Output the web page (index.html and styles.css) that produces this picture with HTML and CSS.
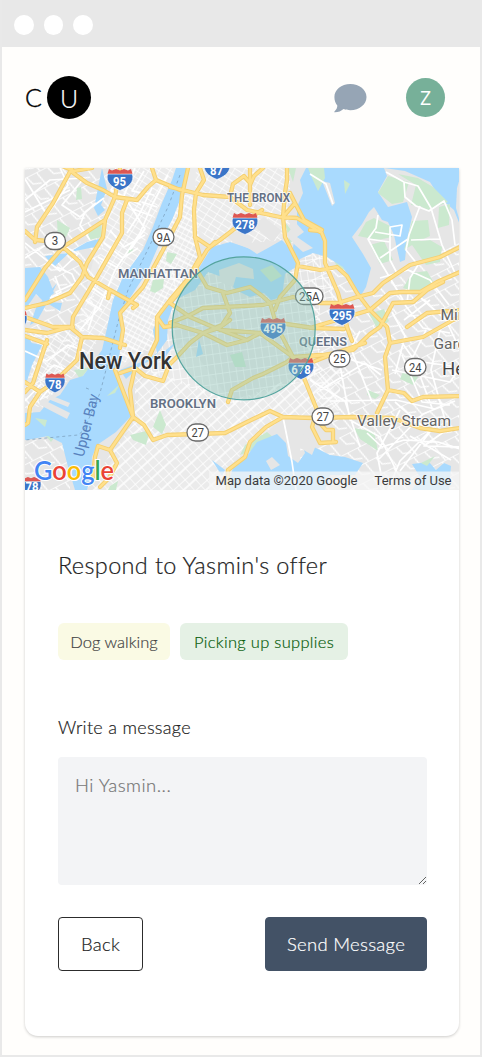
FILE: index.html
```html
<!DOCTYPE html>
<html lang="en">
<head>
<meta charset="utf-8">
<title>Respond to offer</title>
<link rel="stylesheet" href="styles.css">
</head>
<body>
<div class="window">
  <div class="titlebar"><i class="dot"></i><i class="dot"></i><i class="dot"></i></div>
  <header class="header">
    <div class="logo"><span class="logo-c">C</span><span class="logo-u">U</span></div>
    <div class="header-right">
      <svg class="chat" viewBox="0 0 33 30"><path d="M16.3 1C25.4 1 32.5 6.7 32.5 14S25.4 27.2 16.3 27.2C14 27.2 11.500 26.800 9.500 26C7.300 28.100 4 29.400 .7 29.300C.1 29.300 .1 28.700 .5 28.400C2.200 26.800 3.500 24.600 3.300 22.500C1.500 20.200 .4 17.400 .4 14C.4 6.700 7.300 1 16.300 1Z"/></svg>
      <span class="avatar">Z</span>
    </div>
  </header>
  <main class="card">
    <svg class="map" viewBox="25 168 434 322" preserveAspectRatio="none">
      <defs>
        <pattern id="fine" width="5" height="10" patternUnits="userSpaceOnUse" patternTransform="rotate(28)"><path class="st" d="M0 0H5M0 0V10M0 5H5"/></pattern>
        <pattern id="grid" width="9" height="6" patternUnits="userSpaceOnUse" patternTransform="rotate(32)"><path class="st" d="M0 0H9M0 0V6"/></pattern>
        <pattern id="tilt" width="8" height="15" patternUnits="userSpaceOnUse" patternTransform="rotate(-42)"><path class="st" d="M0 0H8M0 0V15M0 7H8"/></pattern>
        <pattern id="bk" width="7" height="10" patternUnits="userSpaceOnUse" patternTransform="rotate(-8)"><path class="st" d="M0 0H7M0 0V10"/></pattern>
        <pattern id="wide" width="23" height="17" patternUnits="userSpaceOnUse" patternTransform="rotate(-27)"><path class="st" d="M0 0H23M0 0L4 17M12 0L15 9L23 12"/></pattern>
        <path id="roads" d="M72 168L53 203L37 227L35 242M25 231L35 240L48 241M72 172L87 183L103 190L115 197L137 200L148 187L156 180M152 168L156 180L180 190M60 165L74 171L92 168M120 168L115 197L105 220L85 233L63 247L45 268L25 300M105 220L103 237L87 263L82 277L70 293L47 303L25 308M63 247L80 262L88 277L110 290L108 298M110 290L137 305L133 308M127 200L122 213L122 233L97 277L73 317L72 327M25 317L53 327L73 327M188 168L182 195L180 217L163 250L143 287L120 313L123 330L120 348M25 330L47 333L70 327L82 337L103 338L125 345M47 340L33 383L25 392M25 336L47 344M82 337L77 360L53 383L40 392L25 382M40 392L30 407L28 423L25 425M115 370L133 417L110 450L98 446L95 457L93 477M110 450L117 463L109 478L100 487M133 417L144 425L153 440L167 435L225 433L247 422L270 411L283 417L313 418L353 417L393 418L420 428L440 431L460 428M283 417L266 427L250 442L245 457L228 470L228 490M120 373L135 368L145 376L163 381L169 365L177 357L190 343L203 333L219 328L230 320M135 368L130 390L133 417M150 355L157 340L157 317L170 300L187 280L200 257L195 237L194 210L196 193L204 180L200 168M157 317L164 327L178 325M195 237L210 247L220 240L242 223L262 210M170 187L203 195L230 197L247 210L280 217L297 218L320 232M250 168L250 205M230 197L233 184L244 176L250 183M263 168L254 176L250 185M287 168L287 180L285 193L283 217L285 237L298 263L295 280L280 297L275 310M283 217L295 203L290 193M295 203L304 220L322 230M298 266L320 270L337 267L347 276L357 293L370 310L387 327L390 343L385 357L388 390L377 413M310 230L321 231L325 241L325 263L338 293L348 330M320 303L338 303L357 297L373 293L383 283L410 265L440 257L460 247M310 328L370 310L390 293L402 292L420 292L437 282L460 272M380 327L393 303L413 302L427 290L443 282M407 327L427 313L460 310M388 390L404 393L412 401L423 397L460 396M390 343L423 337L453 320L460 317M310 357L353 350L370 334L380 327M310 363L338 352L365 343M344 319L352 341M197 270L207 287L227 293L250 287L261 295L270 303L277 327L293 357L320 355M170 303L190 317L213 327L247 340L260 333L280 323L313 328L344 329M170 323L190 315L203 308L263 305L293 297L318 303M170 303L187 283L207 250L215 242M170 323L203 333L227 345L247 340M220 330L260 333L293 357M223 293L230 313L222 325L203 333M228 402L232 390L253 378L263 374L287 362L293 357L302 373L317 410L312 427L320 443L336 442M317 420L326 430L333 430L333 441"/>
        <g id="inter"><path d="M-12.500 -5H12.500C14.500 3 9 8 0 11.500C-9 8 -14.500 3 -12.500 -5Z" fill="#3a75c8" stroke="#fff" stroke-width=".7"/><path d="M-11 -10L-8 -8.500L-4 -10L0 -8.500L4 -10L8 -8.500L11 -10L12.500 -5.300H-12.500Z" fill="#dd5752"/></g>
      </defs>
      <g>
        <path class="land" d="M25 168H460V490H25Z"/>
        <path class="dense" d="M116 168H178L100 340L75 335ZM180 168H285L290 237L195 245L150 345L120 370L122 310ZM150 365L185 340L230 400L330 375L340 410L280 420L225 470V490H95L135 420L140 385Z"/>
        <path fill="url(#wide)" d="M25 168H116L90 320L25 440ZM300 250L340 255L362 300L460 240V490H300V440L340 440L310 380Z"/>
        <path fill="url(#wide)" d="M25 440H70V490H25Z"/>
        <path fill="url(#grid)" d="M116 168H175L105 340H72L97 277ZM196 168H290V240L215 245L194 225ZM25 330H105L75 375L35 410Z"/>
        <path fill="url(#fine)" d="M182 195H196L200 257L150 350L120 365V310L145 285Z"/>
        <path fill="url(#bk)" d="M170 270H320V375L235 405L145 370L170 330ZM290 240H330L335 300H290Z"/>
        <path fill="url(#tilt)" d="M135 365L235 400L340 360V410L280 420L225 470V490H85L135 420Z"/>
        <path class="park" d="M57 220L70 228L66 237L58 241ZM88 230L101 220L102 237L89 240ZM77 188L81 187L82 199L76 200ZM130 245L134 252L128 254ZM167 252L177 254L171 264L166 261ZM160 410L166 425L162 434L153 427ZM130 435L150 430L146 445L133 440ZM153 280L164 279L163 288L155 293L150 291ZM74 370L90 367L80 379ZM245 445L267 432L273 437L256 449L240 455ZM288 168L296 168L293 182ZM285 222L295 235L290 245ZM230 355L242 352L246 367L235 367ZM333 258L343 258L345 270L337 267ZM403 372L418 377L413 385L400 379ZM368 390L380 395L375 399L367 395ZM354 428L374 432L378 451L360 439ZM110 486L118 481L116 490H108ZM45 435L55 437L51 442ZM369 314L384 309L389 321L378 330Z"/>
        <g class="water">
          <path d="M176 168H188L182 195L172 220L160 242L148 270L132 295L123 307L121 330L120 350L117 370L127 397L132 415L116 432L97 445L92 457L91 475L87 490H75L67 463L62 443L48 436L27 440H25V413L40 412L50 400L60 395L70 380L83 376L102 350L107 328L113 300L123 277L143 250L153 227L162 203L172 180Z"/>
          <path d="M120 370L147 360L157 353L153 330L158 317L175 292L192 280L199 268L212 247L230 242L248 248L257 254L268 248L282 240L292 251L297 230L297 207L303 193L300 180L306 168H384L387 176L378 192L388 207L407 202L412 217L407 240L405 260L400 262L394 235L388 222L382 220L374 207L369 212L362 224L352 237L363 254L371 268L366 287L360 297L343 267L327 257L313 253L300 259L296 267L285 274L282 297L271 300L264 293L250 297L236 290L225 278L208 272L195 290L175 300L168 320L167 340L153 359L140 366L126 379Z"/>
          <path d="M384 168H460V225L454 210L440 198L430 182L405 171Z"/>
          <path d="M226 490L233 468L247 456L257 442L277 434L286 443L288 456L298 463L305 453L300 438L312 446L330 455L345 457L363 463L355 475L330 475L325 490Z"/>
          <path d="M412 464L429 462L436 470L444 463L451 466L449 490H412L420 477Z"/>
          <path d="M25 268L40 267L48 277L54 293L44 302L36 294L25 310ZM102 168L107 189L101 205L105 210L98 216L94 208L98 188ZM45 256L68 253L87 242L103 238L95 247L70 252L54 267ZM57 283L48 302L62 303L60 311L47 303L37 321L30 325L36 308ZM25 333L32 343L42 345L32 365L27 381H25ZM199 339L203 354L196 357ZM212 460L225 470L222 476ZM166 350L176 342L163 360L159 358Z"/>
        </g>
        <path class="land" d="M38 397L70 413L67 419L40 405ZM50 395L70 403L68 407L48 399ZM219 270L239 263L253 269L254 279L236 277L233 287L220 282ZM225 234L241 231L253 238L250 249L233 242ZM253 225L264 217L282 231L272 242L263 234ZM286 235L296 223L304 232L297 237L313 248L303 252L295 245ZM322 181L330 183L335 203L332 206ZM272 457L280 465L271 470L266 461ZM293 440L303 434L316 445L312 455L302 449Z"/>
        <path class="park" d="M308 168H324L325 178L318 191L312 178ZM344 180L350 184L345 194ZM260 270L272 265L282 276L271 282ZM374 218L390 226L392 237L378 240L358 236L366 222ZM388 176L409 182L403 202L392 204L378 193ZM398 174L418 178L433 187L448 202L428 210L420 206L411 205L416 185ZM412 221L428 220L430 236L417 242L404 250ZM439 207L450 204L449 225L438 228ZM412 273L427 271L434 283L416 292L403 288ZM370 245L384 241L393 260L380 264ZM410 242L430 240L442 247L440 262L426 265ZM35 418L47 420L45 427ZM108 395L120 384L115 393L107 396ZM421 463L435 456L427 466Z"/>
        <path class="land" d="M460 178V222L456 208L457 188Z"/>
        <path class="street" d="M386 172L404 182L418 186L431 208L442 245L456 275M404 182L405 197L416 206L429 211L444 201L452 220L455 245M420 206L409 235L406 250L418 265L410 278L407 303M411 240L440 239M378 215L376 228L368 239L378 258L393 283L403 300M368 239L390 242M375 232L400 236L402 225L390 227L390 260L398 275M380 258L408 239M310 174L326 184L333 204M380 278L408 270L430 280L449 305M25 179L47 215L68 185L60 168M25 200L50 180L84 178L62 205L80 217L96 203M25 212L70 190M25 258L54 240L78 254L60 271L25 243M55 276L61 292L50 298M57 267L72 274L76 283L56 292L63 302M104 198L85 212L80 225L90 240M122 175L111 190L141 205M135 168L124 196L145 229L130 250M152 188L140 213L127 233M144 171L132 191L154 195M168 175L151 207L140 233L115 270L99 308L80 330M142 202L157 207M133 209L152 216M110 230L124 247L145 235M104 243L123 258L138 248M98 257L118 268M90 286L108 299M82 298L102 310M96 306L88 330M25 351L47 361L68 345L85 351M42 377L54 365L69 371M40 400L58 378M25 401L41 384M283 417L292 462L296 490M340 365L350 420L380 437L396 470M310 380L345 401L360 447M320 390L365 363L381 375M330 401L396 400L435 409M350 346L372 402M360 331L346 358L382 370M400 340L415 361L451 366M402 355L422 402L450 405M392 370L450 382L459 369M426 330L413 357L432 408M440 330L431 370L445 420M400 410L377 453L384 490M367 433L382 447L404 440L438 442L460 449M395 402L429 432L400 461L388 490M379 459L423 414L455 401M410 436L451 460M445 431L424 446L460 447M439 420L400 471M405 305L423 328L450 333M421 298L446 320L460 350M404 320L430 300M392 312L405 336L395 374"/>
        <path class="ferry" d="M180 175L168 207L150 245L128 290L118 322L108 362L100 393L84 430L78 435L25 440M86 388L91 390"/>
        <use href="#roads" class="road-edge"/><use href="#roads" class="road"/>
        <g class="badge">
          <use href="#inter" x="120" y="179"/><use href="#inter" x="217" y="168"/><use href="#inter" x="245" y="223"/><use href="#inter" x="273" y="328"/><use href="#inter" x="342" y="314"/><use href="#inter" x="301" y="368"/><use href="#inter" transform="translate(55 382.500) scale(.78 .9)"/><use href="#inter" transform="translate(31 486) scale(.78 .9)"/><use href="#inter" transform="translate(18 320) scale(.7 .9)"/>
          <text x="113" y="186" textLength="13" lengthAdjust="spacingAndGlyphs">95</text><text x="210" y="175" textLength="13" lengthAdjust="spacingAndGlyphs">87</text><text x="235.300" y="228.500" textLength="19.500" lengthAdjust="spacingAndGlyphs">278</text><text x="263.300" y="333" textLength="19.500" lengthAdjust="spacingAndGlyphs">495</text><text x="332.300" y="319.500" textLength="19.500" lengthAdjust="spacingAndGlyphs">295</text><text x="291.300" y="374" textLength="19.500" lengthAdjust="spacingAndGlyphs">678</text><text x="48.500" y="388.500" textLength="13" lengthAdjust="spacingAndGlyphs">78</text><text x="25.500" y="491" textLength="13" lengthAdjust="spacingAndGlyphs">78</text>
        </g>
        <g class="route">
          <rect x="44.500" y="232.500" width="21" height="17" rx="8.500"/><rect x="153" y="228.500" width="21" height="17" rx="8.500"/><rect x="295.500" y="288" width="27.500" height="16.500" rx="8.200"/><rect x="329" y="350.500" width="21" height="16.500" rx="8.200"/><rect x="404.500" y="358.500" width="21.500" height="17" rx="8.500"/><rect x="312" y="408" width="21.500" height="17" rx="8.500"/><rect x="187" y="424" width="21.500" height="17" rx="8.500"/>
          <text x="51.700" y="245.300" textLength="6.500" lengthAdjust="spacingAndGlyphs">3</text><text x="156.500" y="241.500" textLength="14" lengthAdjust="spacingAndGlyphs">9A</text><text x="299" y="301" textLength="20.500" lengthAdjust="spacingAndGlyphs">25A</text><text x="333.200" y="363.200" textLength="12.500" lengthAdjust="spacingAndGlyphs">25</text><text x="409" y="371.500" textLength="12.500" lengthAdjust="spacingAndGlyphs">24</text><text x="316.500" y="421" textLength="12.500" lengthAdjust="spacingAndGlyphs">27</text><text x="191.500" y="437" textLength="12.500" lengthAdjust="spacingAndGlyphs">27</text>
        </g>
        <g class="area"><text x="227" y="201.700" textLength="63" lengthAdjust="spacingAndGlyphs">THE BRONX</text><text x="118" y="277.700" textLength="80" lengthAdjust="spacingAndGlyphs">MANHATTAN</text><text x="150" y="407.500" textLength="66" lengthAdjust="spacingAndGlyphs">BROOKLYN</text><text x="299" y="346" textLength="48" lengthAdjust="spacingAndGlyphs">QUEENS</text></g>
        <text class="city" x="79" y="368.500" textLength="93" lengthAdjust="spacingAndGlyphs">New York</text>
        <g class="town"><text x="357" y="426" textLength="94" lengthAdjust="spacingAndGlyphs">Valley Stream</text><text x="440.500" y="320">Mineola</text><text x="433.500" y="348.500">Garden City</text></g>
        <text class="hemp" x="442" y="375">Hempstead</text>
        <text class="bay" transform="translate(83.500 457.500) rotate(-76)" textLength="64" lengthAdjust="spacingAndGlyphs">Upper Bay</text>
        <circle class="radius" cx="243.700" cy="328.300" r="71.500"/>
        <path class="attribution" d="M209 471.500H460V490H209Z"/>
        <text class="credit" x="215.500" y="485" textLength="142" lengthAdjust="spacingAndGlyphs">Map data ©2020 Google</text><text class="credit" x="374.500" y="485" textLength="77" lengthAdjust="spacingAndGlyphs">Terms of Use</text>
        <text class="google" x="34" y="480" textLength="80" lengthAdjust="spacingAndGlyphs"><tspan fill="#4285f4">G</tspan><tspan fill="#ea4335">o</tspan><tspan fill="#fbbc05">o</tspan><tspan fill="#4285f4">g</tspan><tspan fill="#34a853">l</tspan><tspan fill="#ea4335">e</tspan></text>
      </g>
    </svg>
    <section class="content">
      <h1 class="title">Respond to Yasmin's offer</h1>
      <div class="tags"><span class="tag tag-dog">Dog walking</span><span class="tag tag-supplies">Picking up supplies</span></div>
      <label class="label" for="message">Write a message</label>
      <textarea class="message" id="message" placeholder="Hi Yasmin..."></textarea>
      <div class="actions"><button class="button back">Back</button><button class="button send">Send Message</button></div>
    </section>
  </main>
</div>
</body>
</html>
```
FILE: styles.css
```css
* { box-sizing: border-box; }
body { margin: 0; background: #fff; font-family: Lato, sans-serif; font-weight: 300; color: #222; -webkit-text-stroke: .2px; }
.window { height: 1057px; border: 2px solid #e9e9e9; border-top: 0; background: #fffefc; }
.titlebar { height: 47px; background: #e8e8e8; display: flex; gap: 10px; padding: 15px 0 0 12px; }
.dot { width: 19.500px; height: 20px; border-radius: 50%; background: #fff; }
.header { height: 121px; padding: 29px 35px 0 23px; display: flex; justify-content: space-between; }
.logo { display: flex; gap: 4px; height: 43px; align-items: center; font-size: 25px; color: #000; }
.logo-c { width: 18px; line-height: 45px; -webkit-text-stroke: .4px; }
.logo-u { width: 44px; height: 43px; border-radius: 50%; background: #000; color: #fff; text-align: center; line-height: 44px; }
.header-right { display: flex; gap: 39px; align-items: center; height: 43px; }
.chat { width: 33px; height: 30px; fill: #96a5b5; }
.avatar { width: 39px; height: 39px; border-radius: 50%; background: #77b099; color: #fff; font: 500 19.500px/40px "Open Sans", sans-serif; text-align: center; -webkit-text-stroke: 0; }
.card { width: 434px; height: 868px; margin-left: 23px; background: #fff; border-radius: 0 0 13px 13px; box-shadow: 0 1px 3px rgba(0,0,0,.2); }
.map { display: block; width: 434px; height: 322px; -webkit-text-stroke: 0; }
.content { padding: 57px 32px 0 33px; display: flex; flex-direction: column; }
.title { margin: 0; font-size: 23.500px; line-height: 36px; font-weight: 300; letter-spacing: .35px; white-space: nowrap; }
.tags { display: flex; gap: 10px; margin-top: 40px; }
.tag { height: 37px; border-radius: 6px; font-size: 16.500px; line-height: 38px; text-align: center; letter-spacing: .3px; white-space: nowrap; }
.tag-dog { width: 112px; background: #fafae4; color: #444; letter-spacing: 0; }
.tag-supplies { width: 168px; background: #e5f1e5; color: #075c0b; }
.label { margin-top: 54px; font-size: 18px; line-height: 26px; letter-spacing: .3px; }
.message { margin-top: 17px; height: 128px; padding: 15px 17px; border: 0; border-radius: 4px; background: #f3f4f6; font: 300 18.500px/26px Lato, sans-serif; letter-spacing: .5px; resize: vertical; }
.message::placeholder { color: #757575; }
.actions { display: flex; justify-content: space-between; margin-top: 32px; }
.button { height: 54px; border-radius: 4px; border: 1px solid #2c2c2c; background: #fff; color: #222; padding: 0; font: 300 18.500px/52px Lato, sans-serif; letter-spacing: .3px; }
.back { width: 85px; }
.send { width: 162px; background: #435266; border-color: #435266; color: #fff; }
.st { fill: none; stroke: #fff; stroke-width: 1.300; }
.land { fill: #e6e6e6; }
.dense { fill: #ebebeb; }
.park { fill: #cbe9cf; }
.water { fill: #a9dafe; }
.street { fill: none; stroke: #fff; stroke-width: 1.700; stroke-linejoin: round; }
.ferry { fill: none; stroke: #7da2c0; stroke-width: .8; stroke-dasharray: 3 3; }
.road-edge, .road { fill: none; stroke-linejoin: round; stroke-linecap: round; }
.road-edge { stroke: #f4cf71; stroke-width: 4.300; }
.road { stroke: #ffe08c; stroke-width: 2.400; }
.badge text { fill: #fff; font: 700 12.500px Roboto, sans-serif; }
.route rect { fill: #fff; stroke: #6b6b6b; stroke-width: 1.300; }
.route text { fill: #444; font: 400 12.500px Roboto, sans-serif; }
.area text, .city, .town text, .hemp { paint-order: stroke; stroke: #fff; stroke-opacity: .8; stroke-width: 2px; stroke-linejoin: round; }
.area text { fill: #647084; font: 600 12.300px Roboto, sans-serif; }
.city { fill: #333; font: 500 23px Roboto, sans-serif; }
.town text { fill: #646464; font: 400 15.500px Roboto, sans-serif; }
.hemp { fill: #444; font: 400 18.500px Roboto, sans-serif; }
.bay { fill: #5781bd; font: 400 15px Roboto, sans-serif; }
.radius { fill: #8cc5b8; fill-opacity: .4; stroke: #54a49e; stroke-width: 1.200; }
.attribution { fill: #f5f5f5; fill-opacity: .75; }
.credit { fill: #3c3c3c; font: 400 13px Roboto, sans-serif; }
.google { font: 600 26px Lato, sans-serif; paint-order: stroke; stroke: #fff; stroke-width: 2px; }
```
